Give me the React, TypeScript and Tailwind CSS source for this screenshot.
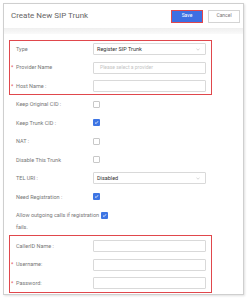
// Create New SIP Trunk – compact form panel with highlighted groups.

type RowProps = { label: string; required?: boolean; children?: React.ReactNode };

function Label({ label, required }: { label: string; required?: boolean }) {
  return (
    <div className="flex w-[82px] shrink-0 items-center text-[5.5px] text-[#777]">
      <span className="w-[5px] text-[#e0474c]">{required ? '*' : ''}</span>
      <span>{label}</span>
    </div>
  );
}

function Row({ label, required, children }: RowProps) {
  return (
    <div className="flex h-[12px] items-center">
      <Label label={label} required={required} />
      <div className="flex-1">{children}</div>
    </div>
  );
}

function PlainRow({ label, children }: RowProps) {
  return (
    <div className="flex h-[18.5px] items-center pl-[7px] pr-[11px]">
      <Label label={label} />
      <div className="flex-1">{children}</div>
    </div>
  );
}

function TextInput({ placeholder }: { placeholder?: string }) {
  return (
    <div className="flex h-[12px] items-center rounded-[1px] border border-[#d9d9d9] bg-white pl-[6px] text-[5px] text-[#c4c4c4]">
      {placeholder}
    </div>
  );
}

function Select({ value }: { value: string }) {
  return (
    <div className="flex h-[12px] items-center justify-between rounded-[1px] border border-[#d9d9d9] bg-white pl-[3px] pr-[5px] text-[5.5px] text-[#333]">
      <span>{value}</span>
      <svg width="4" height="3" viewBox="0 0 4 3" fill="none">
        <path d="M0.5 0.8 L2 2.2 L3.5 0.8" stroke="#bbb" strokeWidth="0.6" />
      </svg>
    </div>
  );
}

function Checkbox({ checked }: { checked?: boolean }) {
  if (checked) {
    return (
      <span className="flex h-[7px] w-[7px] items-center justify-center rounded-[1px] bg-[#3d75e4]">
        <svg width="5" height="5" viewBox="0 0 5 5" fill="none">
          <path d="M1 2.6 L2.1 3.6 L4 1.3" stroke="#fff" strokeWidth="0.8" />
        </svg>
      </span>
    );
  }
  return <span className="block h-[7px] w-[7px] rounded-[1px] border border-[#c8c8c8] bg-white" />;
}

export default function App() {
  return (
    <div className="h-[300px] w-[248px] bg-white pl-[3px] pt-[3px]" style={{ fontFamily: 'Roboto, "Liberation Sans", sans-serif' }}>
      <div className="h-[292px] w-[241px] border border-[#cfcfcf] bg-white shadow-[1px_1px_2px_rgba(0,0,0,0.12)]">
        {/* header */}
        <div className="flex h-[24px] items-center justify-between pl-[7px] pr-[3px]">
          <h1 className="text-[8px] text-[#666]">Create New SIP Trunk</h1>
          <div className="flex gap-[5px]">
            <button className="h-[13px] w-[32px] border border-[#e0474c] bg-[#3d6fe3] text-[5px] text-white">Save</button>
            <button className="h-[13px] w-[32px] border border-[#d4d4d4] bg-white text-[5px] text-[#777]">Cancel</button>
          </div>
        </div>
        <div className="h-[6px] bg-gradient-to-b from-[#efefef] to-[#fafafa]" />

        <div className="px-[5px] pt-[6px]">
          <div className="flex w-[203px] flex-col gap-[6.5px] border border-[#e0474c] pb-[2px] pl-[1px] pr-[5px] pt-[2px]">
            <Row label="Type">
              <Select value="Register SIP Trunk" />
            </Row>
            <Row label="Provider Name" required>
              <TextInput placeholder="Please select a provider" />
            </Row>
            <Row label="Host Name :" required>
              <TextInput />
            </Row>
          </div>
        </div>

        <div className="w-[213px]">
          <PlainRow label="Keep Original CID :"><Checkbox /></PlainRow>
          <PlainRow label="Keep Trunk CID :"><Checkbox checked /></PlainRow>
          <PlainRow label="NAT :"><Checkbox /></PlainRow>
          <PlainRow label="Disable This Trunk"><Checkbox /></PlainRow>
          <PlainRow label="TEL URI :"><Select value="Disabled" /></PlainRow>
          <PlainRow label="Need Registration :"><Checkbox checked /></PlainRow>
          <div className="pl-[12px] pt-[3px] text-[5.5px] leading-[12px] text-[#777]">
            <div className="flex items-center gap-[2px] whitespace-nowrap">
              <span>Allow outgoing calls if registration</span>
              <Checkbox checked />
            </div>
            <div>fails.</div>
          </div>
        </div>

        <div className="px-[5px] pt-[2px]">
          <div className="flex w-[203px] flex-col gap-[6.5px] border border-[#e0474c] pb-[3px] pl-[1px] pr-[5px] pt-[4px]">
            <Row label="CallerID Name :">
              <TextInput />
            </Row>
            <Row label="Username:" required>
              <TextInput />
            </Row>
            <Row label="Password:" required>
              <TextInput />
            </Row>
          </div>
        </div>
      </div>
    </div>
  );
}
